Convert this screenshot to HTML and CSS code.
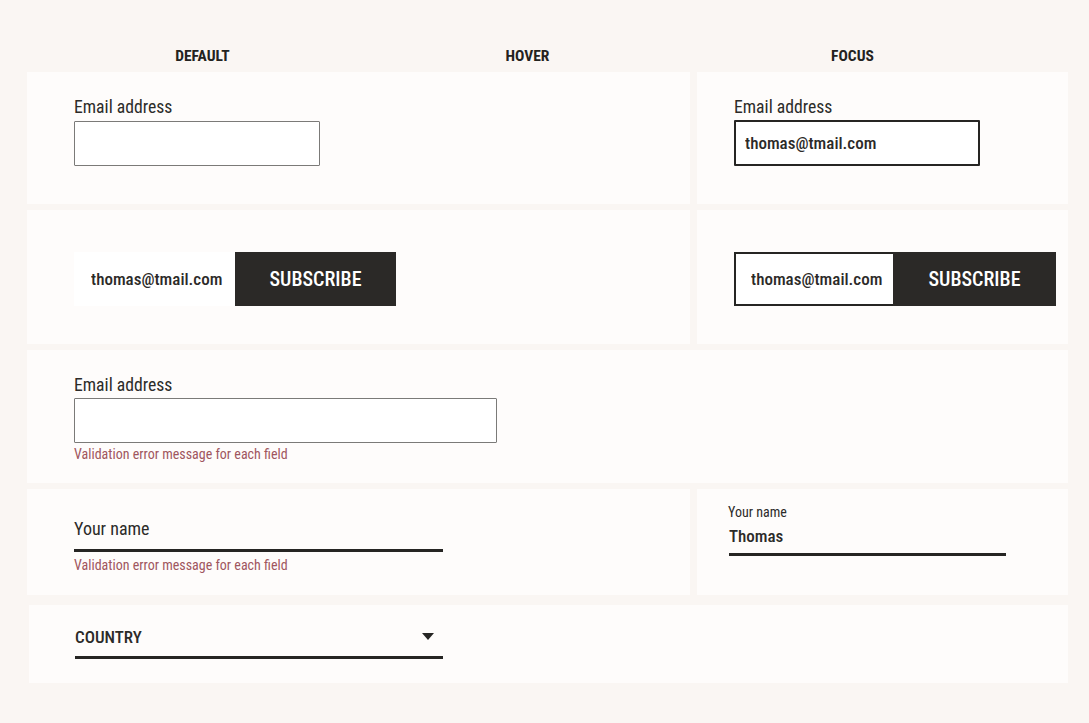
FILE: index.html
```html
<!DOCTYPE html>
<html lang="en">
<head>
  <meta charset="UTF-8">
  <title>Form field states</title>
  <link rel="stylesheet" href="styles.css">
</head>
<body>
  <div class="page">

    <!-- column titles -->
    <div class="states-header">
      <span>DEFAULT</span>
      <span>HOVER</span>
      <span>FOCUS</span>
    </div>

    <div class="board">

      <!-- email input -->
      <div class="card card-left">
        <label class="label" for="email-default">Email address</label>
        <input class="text-input" type="text" id="email-default">
      </div>
      <div class="card card-right">
        <label class="label" for="email-focus">Email address</label>
        <input class="text-input focused" type="text" id="email-focus" value="thomas@tmail.com">
      </div>

      <!-- subscribe -->
      <div class="card card-left card-middle">
        <div class="subscribe">
          <input class="subscribe-input" type="text" value="thomas@tmail.com">
          <button class="subscribe-btn" type="button">SUBSCRIBE</button>
        </div>
      </div>
      <div class="card card-right card-middle">
        <div class="subscribe">
          <input class="subscribe-input focused" type="text" value="thomas@tmail.com">
          <button class="subscribe-btn" type="button">SUBSCRIBE</button>
        </div>
      </div>

      <!-- error state -->
      <div class="card card-full">
        <label class="label" for="email-error">Email address</label>
        <input class="text-input wide" type="text" id="email-error">
        <div class="error">Validation error message for each field</div>
      </div>

      <!-- underline fields -->
      <div class="card card-left card-line">
        <div class="line-field">
          <span class="line-placeholder">Your name</span>
        </div>
        <div class="error error-line">Validation error message for each field</div>
      </div>
      <div class="card card-right card-line-filled">
        <div class="line-field filled">
          <span class="line-small">Your name</span>
          <span class="line-value">Thomas</span>
        </div>
      </div>

      <!-- select -->
      <div class="card card-full card-select">
        <div class="line-field select-field">
          <span class="select-text">COUNTRY</span>
          <svg class="caret" width="12" height="7" viewBox="0 0 12 7">
            <polygon points="0,0 12,0 6,7" fill="#262523"/>
          </svg>
        </div>
      </div>

    </div>
  </div>
</body>
</html>
```

FILE: styles.css
```css
body {
  margin: 0;
  background-color: #faf6f3;
  font-family: "Roboto Condensed", "Open Sans", sans-serif;
  color: #2b2a28;
}
.page {
  padding: 47px 21px 40px 27px;
}
.states-header {
  display: grid;
  grid-template-columns: repeat(3, 325px);
  margin-left: 13px;
  height: 25px;
  font-size: 15.5px;
  line-height: 18px;
  font-weight: bold;
  text-align: center;
  color: #232220;
}
.board {
  display: grid;
  grid-template-columns: 663px 371px;
  grid-template-rows: 132px 134px 133px 110px 78px;
  column-gap: 7px;
  row-gap: 6px;
}
.card {
  background: #fefcfb;
  padding: 24px 0 0 47px;
}
.card-right {
  padding-left: 37px;
}
.card-full {
  grid-column: 1 / 3;
}
.label {
  display: block;
  font-size: 17.7px;
  line-height: 22px;
  margin-bottom: 3px;
  color: #2c2b29;
}
.card-right .label,
.card-full .label {
  margin-bottom: 2px;
}
.text-input {
  display: block;
  box-sizing: border-box;
  width: 246px;
  height: 45px;
  margin: 0;
  padding: 0 10px;
  border: 1px solid #7b7a78;
  border-radius: 1px;
  background: #fff;
  font-family: inherit;
  font-size: 17px;
  font-weight: 500;
  color: #2b2a28;
  outline: none;
}
.text-input.focused {
  border: 2px solid #262523;
  height: 46px;
  padding-left: 9px;
}
.text-input.wide {
  width: 423px;
}
.card-middle {
  padding-top: 42px;
}
.subscribe {
  display: flex;
  height: 54px;
}
.subscribe-input {
  box-sizing: border-box;
  width: 161px;
  height: 54px;
  margin: 0;
  padding: 0 0 0 17px;
  border: none;
  background: #fff;
  font-family: inherit;
  font-size: 17px;
  font-weight: 500;
  color: #2b2a28;
  outline: none;
}
.subscribe-input.focused {
  width: 159px;
  border: 2px solid #262523;
  border-right: none;
  padding-left: 15px;
}
.subscribe-btn {
  width: 161px;
  height: 54px;
  margin: 0;
  border: none;
  background-color: #2b2927;
  color: #fff;
  font-family: inherit;
  font-size: 20px;
  font-weight: 500;
  cursor: pointer;
}
.card-right .subscribe-btn {
  width: 163px;
}
.error {
  margin-top: 2px;
  font-size: 14px;
  line-height: 18px;
  color: #a0565e;
}
.error-line {
  margin-top: 4px;
}
.card-line {
  padding-top: 29px;
}
.card-line,
.card-line-filled {
  box-sizing: border-box;
  height: 106px;
  align-self: start;
}
.line-field {
  width: 369px;
  border-bottom: 3px solid #262523;
}
.line-placeholder {
  display: block;
  font-size: 18px;
  line-height: 22px;
  padding-bottom: 9px;
  color: #2c2b29;
}
.card-line-filled {
  padding: 14px 0 0 31px;
}
.line-field.filled {
  width: 277px;
  margin-left: 1px;
}
.line-small {
  display: block;
  margin-left: -1px;
  font-size: 14px;
  line-height: 18px;
  color: #2c2b29;
}
.line-value {
  display: block;
  font-size: 17px;
  font-weight: 500;
  line-height: 22px;
  padding: 4px 0 6px;
}
.card-select {
  margin-left: 2px;
  padding: 18px 0 0 46px;
}
.select-field {
  display: flex;
  align-items: flex-start;
  justify-content: space-between;
  width: 368px;
  height: 29px;
  padding-top: 4px;
}
.select-text {
  font-size: 17px;
  font-weight: 500;
  line-height: 20px;
}
.caret {
  margin: 6px 9px 0 0;
}
```
